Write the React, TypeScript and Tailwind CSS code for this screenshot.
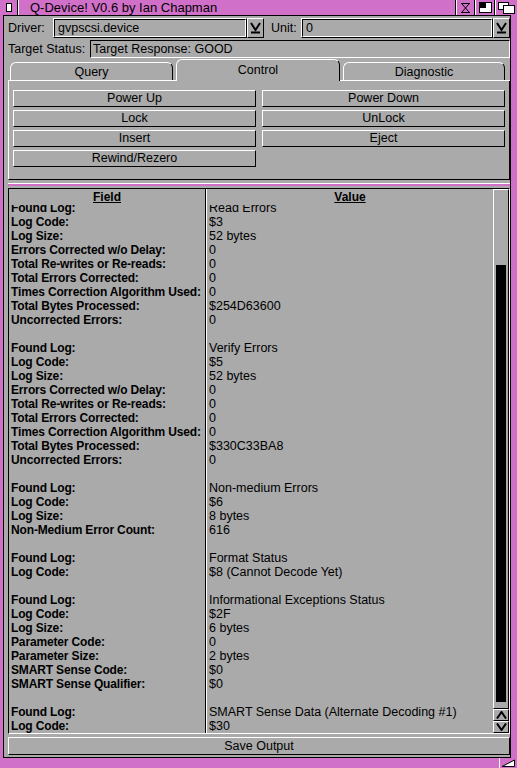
import React from 'react';

// Amiga style bevels
const raised = 'border border-t-white border-l-white border-r-black border-b-black';
const recessed = 'border border-t-black border-l-black border-r-white border-b-white';

const rows: [string, string][] = [
  ['Found Log:', 'Read Errors'],
  ['Log Code:', '$3'],
  ['Log Size:', '52 bytes'],
  ['Errors Corrected w/o Delay:', '0'],
  ['Total Re-writes or Re-reads:', '0'],
  ['Total Errors Corrected:', '0'],
  ['Times Correction Algorithm Used:', '0'],
  ['Total Bytes Processed:', '$254D63600'],
  ['Uncorrected Errors:', '0'],
  ['', ''],
  ['Found Log:', 'Verify Errors'],
  ['Log Code:', '$5'],
  ['Log Size:', '52 bytes'],
  ['Errors Corrected w/o Delay:', '0'],
  ['Total Re-writes or Re-reads:', '0'],
  ['Total Errors Corrected:', '0'],
  ['Times Correction Algorithm Used:', '0'],
  ['Total Bytes Processed:', '$330C33BA8'],
  ['Uncorrected Errors:', '0'],
  ['', ''],
  ['Found Log:', 'Non-medium Errors'],
  ['Log Code:', '$6'],
  ['Log Size:', '8 bytes'],
  ['Non-Medium Error Count:', '616'],
  ['', ''],
  ['Found Log:', 'Format Status'],
  ['Log Code:', '$8 (Cannot Decode Yet)'],
  ['', ''],
  ['Found Log:', 'Informational Exceptions Status'],
  ['Log Code:', '$2F'],
  ['Log Size:', '6 bytes'],
  ['Parameter Code:', '0'],
  ['Parameter Size:', '2 bytes'],
  ['SMART Sense Code:', '$0'],
  ['SMART Sense Qualifier:', '$0'],
  ['', ''],
  ['Found Log:', 'SMART Sense Data (Alternate Decoding #1)'],
  ['Log Code:', '$30'],
];

function DropButton() {
  return (
    <div className={`w-[17px] h-full flex items-center justify-center ${raised}`}>
      <svg width="11" height="12" viewBox="0 0 11 12">
        <polyline points="1,1 5.5,8 10,1" fill="none" stroke="black" strokeWidth="2" />
        <line x1="1" y1="10.5" x2="10" y2="10.5" stroke="black" strokeWidth="2" />
      </svg>
    </div>
  );
}

function StringField({ value }: { value: string }) {
  return (
    <div className={`h-full ${raised}`}>
      <div className={`h-full ${recessed} pl-[3px] leading-[16px] overflow-hidden whitespace-nowrap`}>{value}</div>
    </div>
  );
}

function Gadget({ width, children }: { width: string; children: React.ReactNode }) {
  return (
    <div className={`${width} h-full flex border-l border-l-black`}>
      <div className="w-[1px] h-full bg-white" />
      <div className="flex-1 flex items-center justify-center">{children}</div>
    </div>
  );
}

function Tab({ label, active, width }: { label: string; active?: boolean; width: string }) {
  return (
    <div
      className={`${width} rounded-t-[6px] border-t border-l border-r border-t-white border-l-white border-r-black flex items-center justify-center ${
        active ? 'h-[22px] -mb-[1px] bg-[#aaaaaa] relative z-10' : 'h-[18px] pt-[1px]'
      }`}
    >
      {label}
    </div>
  );
}

function Button({ label }: { label: string }) {
  return <div className={`h-[17px] ${raised} flex items-center justify-center leading-none`}>{label}</div>;
}

export default function App() {
  return (
    <div
      className="w-[517px] h-[768px] bg-[#d070c8] flex flex-col text-black text-[12.5px] overflow-hidden"
      style={{ fontFamily: '"Liberation Sans", Arial, sans-serif' }}
    >
      {/* Title bar */}
      <div className="h-[15px] flex">
        <div className="w-[18px] h-full flex items-center justify-center border-r border-r-black">
          <div className="w-[6px] h-[9px] bg-white border border-black" />
        </div>
        <div className="w-[1px] h-full bg-white" />
        <div className="flex-1 pl-[11px] text-[13px] leading-[15px] whitespace-nowrap">Q-Device! V0.6 by Ian Chapman</div>
        <Gadget width="w-[19px]">
          <svg width="11" height="10" viewBox="0 0 11 10">
            <path d="M1 0.5H10M1 9.5H10M2 1L9 9M9 1L2 9" stroke="black" strokeWidth="1" fill="none" />
          </svg>
        </Gadget>
        <Gadget width="w-[20px]">
          <svg width="13" height="11" viewBox="0 0 13 11">
            <rect x="0.5" y="0.5" width="12" height="10" fill="white" stroke="black" />
            <rect x="1" y="1" width="6" height="5" fill="black" />
          </svg>
        </Gadget>
        <Gadget width="w-[23px]">
          <svg width="17" height="12" viewBox="0 0 17 12">
            <rect x="0.5" y="0.5" width="10" height="7" fill="white" stroke="black" />
            <rect x="5.5" y="3.5" width="11" height="8" fill="white" stroke="black" />
          </svg>
        </Gadget>
      </div>

      {/* Window body */}
      <div className="h-[743px] ml-[3px] w-[508px] bg-[#aaaaaa] border border-black pl-[4px] flex flex-col">
        {/* Driver / Unit */}
        <div className="mt-[2px] h-[20px] flex items-center">
          <div className="w-[45px]">Driver:</div>
          <div className="w-[194px] h-full">
            <StringField value="gvpscsi.device" />
          </div>
          <DropButton />
          <div className="ml-[7px] w-[30px]">Unit:</div>
          <div className="flex-1 h-full">
            <StringField value="0" />
          </div>
          <DropButton />
        </div>

        {/* Target status */}
        <div className="mt-[2px] h-[18px] flex items-center">
          <div className="w-[82px] whitespace-nowrap">Target Status:</div>
          <div className={`flex-1 h-full ${recessed} pl-[2px] leading-[16px]`}>Target Response: GOOD</div>
        </div>

        {/* Tabs */}
        <div className="mt-[2px] h-[21px] flex items-end gap-[3px] pl-[2px] border-b border-b-white">
          <Tab label="Query" width="w-[163px]" />
          <Tab label="Control" width="w-[164px]" active />
          <Tab label="Diagnostic" width="w-[162px]" />
        </div>
        <div className="h-[99px] border-l border-l-white border-r border-r-black border-b border-b-black px-[4px] pt-[9px]">
          <div className="grid grid-cols-2 gap-x-[6px] gap-y-[3px]">
            <Button label="Power Up" />
            <Button label="Power Down" />
            <Button label="Lock" />
            <Button label="UnLock" />
            <Button label="Insert" />
            <Button label="Eject" />
            <Button label="Rewind/Rezero" />
          </div>
        </div>

        {/* Balance bar */}
        <div className="mt-[3px] h-[1px] bg-white" />
        <div className="h-[2px] bg-[#d070c8]" />
        <div className="h-[2px]" />

        {/* List view */}
        <div className={`h-[546px] ${recessed} flex`}>
          <div className="w-[197px] border-r border-r-black flex flex-col">
            <div className="h-[16px] leading-[17px] text-center font-bold underline text-[12px]">Field</div>
            <div className="flex-1 overflow-hidden">
              <div className="-mt-[4px]">
                {rows.map(([label], i) => (
                  <div key={i} className="h-[14px] leading-[14px] pl-[2px] font-bold text-[12px] tracking-[-0.15px] whitespace-nowrap">
                    {label}
                  </div>
                ))}
              </div>
            </div>
          </div>
          <div className="flex-1 border-l border-l-white flex flex-col">
            <div className="h-[16px] leading-[17px] text-center font-bold underline text-[12px]">Value</div>
            <div className="flex-1 overflow-hidden">
              <div className="-mt-[4px]">
                {rows.map(([, value], i) => (
                  <div key={i} className="h-[14px] leading-[14px] pl-[2px] whitespace-nowrap">
                    {value}
                  </div>
                ))}
              </div>
            </div>
          </div>
          {/* Scroller */}
          <div className="w-[16px] flex flex-col">
            <div className={`flex-1 ${raised} px-[2px] pt-[75px]`}>
              <div className="h-[437px] bg-black" />
            </div>
            <div className={`h-[12px] ${raised} flex items-center justify-center`}>
              <svg width="11" height="8" viewBox="0 0 11 8">
                <polyline points="1,7.5 5.5,1 10,7.5" fill="none" stroke="black" strokeWidth="2" />
              </svg>
            </div>
            <div className={`h-[12px] ${raised} flex items-center justify-center`}>
              <svg width="11" height="8" viewBox="0 0 11 8">
                <polyline points="1,0.5 5.5,7 10,0.5" fill="none" stroke="black" strokeWidth="2" />
              </svg>
            </div>
          </div>
        </div>

        <div className={`mt-[3px] h-[18px] ${raised} flex items-center justify-center leading-none`}>Save Output</div>
      </div>

      {/* Bottom border with size gadget */}
      <div className="h-[10px] flex justify-end">
        <div className="w-[18px] h-full flex border-l border-l-white">
          <svg width="17" height="10" viewBox="0 0 17 10">
            <polygon points="2,8.5 14.5,8.5 14.5,2" fill="white" stroke="black" strokeWidth="1" />
          </svg>
        </div>
      </div>
    </div>
  );
}
